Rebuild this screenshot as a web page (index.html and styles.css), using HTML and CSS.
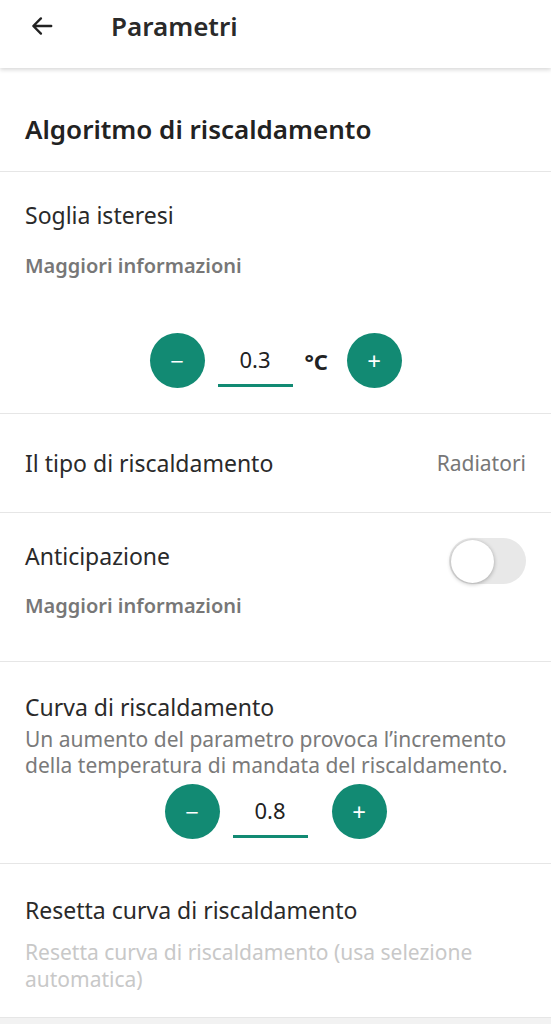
FILE: index.html
```html
<!DOCTYPE html>
<html lang="it">
    <head>
        <meta charset="utf-8">
        <meta name="viewport" content="width=device-width, initial-scale=1.0">
        <title>Parametri</title>
        <link rel="stylesheet" href="styles.css">
    </head>
    <body>
        <header class="topbar">
            <button class="back" aria-label="Indietro">
                <svg width="26" height="26" viewBox="0 0 24 24"><path d="M20.5 12H4.5M11 5l-7 7 7 7" fill="none" stroke="#222" stroke-width="2.2" stroke-linecap="round" stroke-linejoin="round"/></svg>
            </button>
            <h1>Parametri</h1>
        </header>

        <main>
            <h2 class="section-title">Algoritmo di riscaldamento</h2>

            <div class="row soglia">
                <p class="label">Soglia isteresi</p>
                <a class="more">Maggiori informazioni</a>
                <div class="stepper">
                    <button class="round">&minus;</button>
                    <span class="value">0.3</span>
                    <span class="unit">°C</span>
                    <button class="round">+</button>
                </div>
            </div>

            <div class="row inline">
                <p class="label">Il tipo di riscaldamento</p>
                <span class="side">Radiatori</span>
            </div>

            <div class="row anticipo">
                <div class="inline-head">
                    <p class="label">Anticipazione</p>
                    <span class="switch"><span class="knob"></span></span>
                </div>
                <a class="more">Maggiori informazioni</a>
            </div>

            <div class="row curve">
                <p class="label">Curva di riscaldamento</p>
                <p class="desc">Un aumento del parametro provoca l’incremento della temperatura di mandata del riscaldamento.</p>
                <div class="stepper">
                    <button class="round">&minus;</button>
                    <span class="value">0.8</span>
                    <button class="round">+</button>
                </div>
            </div>

            <div class="row reset">
                <p class="label">Resetta curva di riscaldamento</p>
                <p class="desc faded">Resetta curva di riscaldamento (usa selezione automatica)</p>
            </div>
        </main>
        <div class="bottom"></div>
    </body>
</html>
```

FILE: styles.css
```css
body {
    margin: 0;
    font-family: "Noto Sans", "Open Sans", sans-serif;
    color: #222;
    background: #fff;
}

p {
    margin: 0;
}

.topbar {
    height: 68px;
    box-sizing: border-box;
    padding-top: 9px;
    display: flex;
    align-items: flex-start;
    box-shadow: 0 2px 4px rgba(0, 0, 0, 0.15);
    position: relative;
}

.back {
    border: none;
    background: none;
    padding: 0;
    margin: 4px 0 0 29px;
    width: 26px;
    height: 26px;
}

.topbar h1 {
    margin: 0 0 0 56px;
    font-size: 26px;
    line-height: 34px;
    font-weight: 600;
    color: #2a2a2a;
}

.section-title {
    margin: 0;
    padding: 43px 25px 0;
    height: 104px;
    box-sizing: border-box;
    font-size: 26px;
    line-height: 36px;
    font-weight: 600;
    color: #222;
    border-bottom: 1px solid #e6e6e6;
}

.row {
    padding: 0 25px;
    border-bottom: 1px solid #e6e6e6;
}

.label {
    font-size: 23px;
    line-height: 30px;
    color: #2a2a2a;
}

.more {
    display: block;
    font-size: 20px;
    line-height: 26px;
    font-weight: 600;
    color: #777;
}

.soglia {
    padding-top: 28px;
    padding-bottom: 25px;
}

.soglia .more {
    margin-top: 23px;
}

.soglia .stepper {
    margin-top: 54px;
}

.inline {
    height: 98px;
    display: flex;
    align-items: center;
    justify-content: space-between;
}

.side {
    font-size: 21px;
    color: #777;
}

.anticipo {
    padding-top: 28px;
    padding-bottom: 42px;
}

.inline-head {
    display: flex;
    align-items: flex-start;
    justify-content: space-between;
}

.anticipo .more {
    margin-top: 9px;
}

.switch {
    width: 77px;
    height: 46px;
    margin-top: -3px;
    border-radius: 23px;
    background: #e8e8e8;
    display: flex;
    align-items: center;
    padding: 0 2px;
    box-sizing: border-box;
}

.knob {
    width: 43px;
    height: 43px;
    border-radius: 50%;
    background: #fff;
    box-shadow: 0 1px 4px rgba(0, 0, 0, 0.3);
}

.stepper {
    display: flex;
    align-items: center;
    justify-content: center;
}

.round {
    width: 55px;
    height: 55px;
    border-radius: 50%;
    border: none;
    background: #128a73;
    color: #fff;
    font-size: 24px;
    font-family: inherit;
    padding: 0;
}

.value {
    width: 75px;
    height: 52px;
    box-sizing: border-box;
    padding-top: 9px;
    border-bottom: 3px solid #128a73;
    text-align: center;
    font-size: 22px;
    line-height: 30px;
    margin: 0 12px 0 13px;
}

.unit {
    font-size: 22px;
    font-weight: 700;
    width: 28px;
    margin-right: 14px;
}

.desc {
    font-size: 21px;
    line-height: 26px;
    color: #7a7a7a;
}

.curve {
    padding-top: 30px;
    padding-bottom: 24px;
}

.curve .desc {
    margin-top: 4px;
}

.curve .stepper {
    margin-top: 6px;
}

.curve .value {
    margin-right: 24px;
}

.reset {
    padding-top: 31px;
    padding-bottom: 24px;
}

.reset .desc {
    margin-top: 14px;
    line-height: 27px;
}

.faded {
    color: #c8c8c8;
}

.bottom {
    height: 10px;
    background: #f2f2f2;
}
```
